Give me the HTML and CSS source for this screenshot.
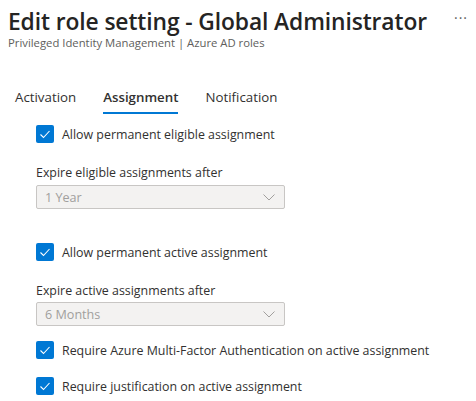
FILE: index.html
```html
<!DOCTYPE html>
<html>
<head>
<meta charset="utf-8">
<link rel="stylesheet" href="styles.css">
</head>
<body>
<div class="page">
  <header class="header">
    <div class="title-row">
      <h1 class="title">Edit role setting - Global Administrator</h1>
      <span class="more">&middot;&middot;&middot;</span>
    </div>
    <div class="subtitle">Privileged Identity Management | Azure AD roles</div>
  </header>
  <nav class="tabs">
    <div class="tab">Activation</div>
    <div class="tab active">Assignment</div>
    <div class="tab">Notification</div>
  </nav>
  <div class="form">
    <label class="check-row r1">
      <span class="box"><svg viewBox="0 0 18 18" width="18" height="18"><path d="M4.5 9.5 L7.5 12.5 L13.5 6" fill="none" stroke="#fff" stroke-width="1.1"/></svg></span>
      <span class="check-label">Allow permanent eligible assignment</span>
    </label>
    <div class="field-label l1">Expire eligible assignments after</div>
    <div class="dropdown d1">
      <span>1 Year</span>
      <svg class="chev" viewBox="0 0 12 7" width="12" height="7"><path d="M0.5 0.5 L6 6 L11.5 0.5" fill="none" stroke="#a19f9d" stroke-width="1"/></svg>
    </div>
    <label class="check-row r2">
      <span class="box"><svg viewBox="0 0 18 18" width="18" height="18"><path d="M4.5 9.5 L7.5 12.5 L13.5 6" fill="none" stroke="#fff" stroke-width="1.1"/></svg></span>
      <span class="check-label">Allow permanent active assignment</span>
    </label>
    <div class="field-label l2">Expire active assignments after</div>
    <div class="dropdown d2">
      <span>6 Months</span>
      <svg class="chev" viewBox="0 0 12 7" width="12" height="7"><path d="M0.5 0.5 L6 6 L11.5 0.5" fill="none" stroke="#a19f9d" stroke-width="1"/></svg>
    </div>
    <label class="check-row r3">
      <span class="box"><svg viewBox="0 0 18 18" width="18" height="18"><path d="M4.5 9.5 L7.5 12.5 L13.5 6" fill="none" stroke="#fff" stroke-width="1.1"/></svg></span>
      <span class="check-label">Require Azure Multi-Factor Authentication on active assignment</span>
    </label>
    <label class="check-row r4">
      <span class="box"><svg viewBox="0 0 18 18" width="18" height="18"><path d="M4.5 9.5 L7.5 12.5 L13.5 6" fill="none" stroke="#fff" stroke-width="1.1"/></svg></span>
      <span class="check-label">Require justification on active assignment</span>
    </label>
  </div>
</div>
</body>
</html>
```
FILE: styles.css
```css
html, body {
  margin: 0;
  padding: 0;
  background: #ffffff;
}
body {
  font-family: "Open Sans", "Noto Sans", "Liberation Sans", sans-serif;
  color: #323130;
}
.page {
  width: 476px;
  height: 401px;
  overflow: hidden;
}
.header {
  padding: 0 8px;
}
.title-row {
  display: flex;
  align-items: center;
  justify-content: space-between;
  padding-top: 8px;
}
.title {
  margin: 0;
  font-size: 22.8px;
  font-weight: 600;
  line-height: 27px;
  color: #252423;
  letter-spacing: -0.1px;
}
.more {
  font-size: 14px;
  color: #605e5c;
  padding-right: 0;
  letter-spacing: 1px;
  margin-top: -8px;
}
.subtitle {
  font-size: 11.3px;
  line-height: 14px;
  margin-top: 1px;
  color: #605e5c;
}
.tabs {
  display: flex;
  margin-top: 37px;
  padding-left: 15px;
  gap: 27px;
}
.tab {
  font-size: 13.3px;
  line-height: 20px;
  padding-bottom: 5px;
  border-bottom: 2px solid transparent;
  color: #323130;
}
.tab.active {
  font-weight: 600;
  border-bottom-color: #0078d4;
}
.form {
  padding-left: 36px;
  display: flex;
  flex-direction: column;
  align-items: flex-start;
}
.check-row {
  display: flex;
  align-items: center;
  height: 20px;
  gap: 8px;
  font-size: 12.4px;
}
.box {
  width: 18px;
  height: 18px;
  border-radius: 2px;
  background: #0078d4;
  display: flex;
}
.r1 { margin-top: 10px; }
.r2 { margin-top: 33px; }
.r3 { margin-top: 14px; }
.r4 { margin-top: 16px; }
.field-label {
  font-size: 12.4px;
  line-height: 20px;
}
.l1 { margin-top: 19px; }
.l2 { margin-top: 19px; }
.dropdown {
  box-sizing: border-box;
  width: 249px;
  height: 24px;
  border: 1px solid #c8c6c4;
  border-radius: 2px;
  background: #f3f2f1;
  display: flex;
  align-items: center;
  justify-content: space-between;
  padding: 0 9px 0 8px;
  font-size: 12.6px;
  color: #a19f9d;
}
.d1 { margin-top: 2px; }
.d2 { margin-top: 1px; }
.chev {
  display: block;
}
```
